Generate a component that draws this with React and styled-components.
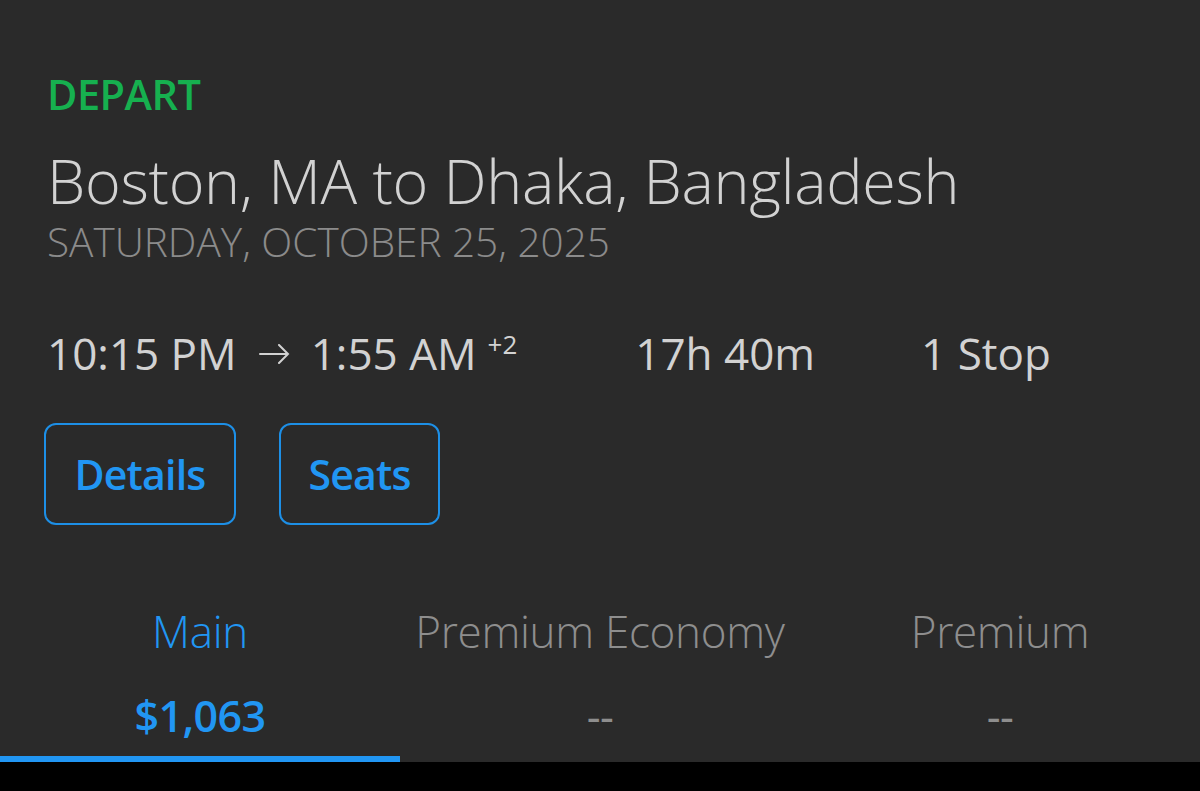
import React from "react";
import styled, { createGlobalStyle } from "styled-components";

const Global = createGlobalStyle`
  html, body { margin: 0; padding: 0; background: #000; }
  body { font-family: "Open Sans", "Noto Sans", sans-serif; }
`;

const Screen = styled.div`
  width: 1200px;
  height: 791px;
  background: #000;
  overflow: hidden;
`;

const Card = styled.div`
  height: 762px;
  background: #2a2a2a;
  display: flex;
  flex-direction: column;
`;

const Header = styled.div`
  padding: 69px 0 0 47px;
  display: flex;
  flex-direction: column;
`;

const Label = styled.div`
  color: #16b04f;
  font-size: 41.5px;
  font-weight: 600;
  line-height: 50px;
  letter-spacing: -0.5px;
`;

const Title = styled.h1`
  margin: 27px 0 0;
  color: #d2d2d2;
  font-size: 61px;
  font-weight: 300;
  line-height: 70px;
  letter-spacing: -0.3px;
`;

const DateLine = styled.div`
  color: #8b8b8b;
  font-size: 40.5px;
  font-weight: 300;
  line-height: 46px;
  margin-top: 3px;
`;

const TimeRow = styled.div`
  margin-top: 61px;
  display: flex;
  align-items: baseline;
  gap: 106px;
  color: #d2d2d2;
  font-size: 44px;
  font-weight: 500;
  line-height: 54px;
`;

const Times = styled.div`
  display: flex;
  align-items: center;
  margin-right: 12px;
`;

const ArrowIcon = styled.svg`
  flex: none;
  width: 31px;
  height: 20px;
  margin: 0 21px 0 22px;
  position: relative;
  top: 1px;
`;

const Plus = styled.span`
  align-self: flex-start;
  font-size: 26px;
  font-weight: 400;
  line-height: 26px;
  margin-left: 11px;
  margin-top: 5px;
`;

const Buttons = styled.div`
  margin: 43px 0 0 -3px;
  display: flex;
  gap: 43px;
`;

const OutlineButton = styled.button`
  height: 102px;
  width: ${(p) => p.$w}px;
  border: 2px solid #1d8fe6;
  border-radius: 12px;
  background: transparent;
  color: #2196f3;
  font-family: inherit;
  font-size: 41px;
  font-weight: 600;
  letter-spacing: -0.8px;
  padding: 0;
`;

const Tabs = styled.div`
  margin-top: auto;
  display: grid;
  grid-template-columns: repeat(3, 400px);
`;

const Tab = styled.div`
  display: flex;
  flex-direction: column;
  align-items: center;
  height: 161px;
  border-bottom: 6px solid ${(p) => (p.$active ? "#2196f3" : "transparent")};
  box-sizing: border-box;
  color: ${(p) => (p.$active ? "#2196f3" : "#8e8e8e")};
`;

const TabName = styled.div`
  font-size: 44px;
  font-weight: 300;
  line-height: 60px;
  letter-spacing: -0.3px;
`;

const Price = styled.div`
  margin-top: 30px;
  font-size: 43px;
  font-weight: ${(p) => (p.$active ? 600 : 400)};
  line-height: 50px;
  letter-spacing: -0.6px;
`;

const fares = [
  { name: "Main", price: "$1,063", active: true },
  { name: "Premium Economy", price: "--" },
  { name: "Premium", price: "--" },
];

export default function App() {
  return (
    <Screen>
      <Global />
      <Card>
        <Header>
          <Label>DEPART</Label>
          <Title>Boston, MA to Dhaka, Bangladesh</Title>
          <DateLine>SATURDAY, OCTOBER 25, 2025</DateLine>
          <TimeRow>
            <Times>
              <span>10:15 PM</span>
              <ArrowIcon viewBox="0 0 31 20" fill="none" stroke="#d2d2d2" strokeWidth="2" strokeLinecap="round">
                <path d="M1 10h28M20 1l9 9-9 9" />
              </ArrowIcon>
              <span>1:55 AM</span>
              <Plus>+2</Plus>
            </Times>
            <span>17h 40m</span>
            <span>1 Stop</span>
          </TimeRow>
          <Buttons>
            <OutlineButton $w={192}>Details</OutlineButton>
            <OutlineButton $w={161}>Seats</OutlineButton>
          </Buttons>
        </Header>
        <Tabs>
          {fares.map((f) => (
            <Tab key={f.name} $active={f.active}>
              <TabName>{f.name}</TabName>
              <Price $active={f.active}>{f.price}</Price>
            </Tab>
          ))}
        </Tabs>
      </Card>
    </Screen>
  );
}
